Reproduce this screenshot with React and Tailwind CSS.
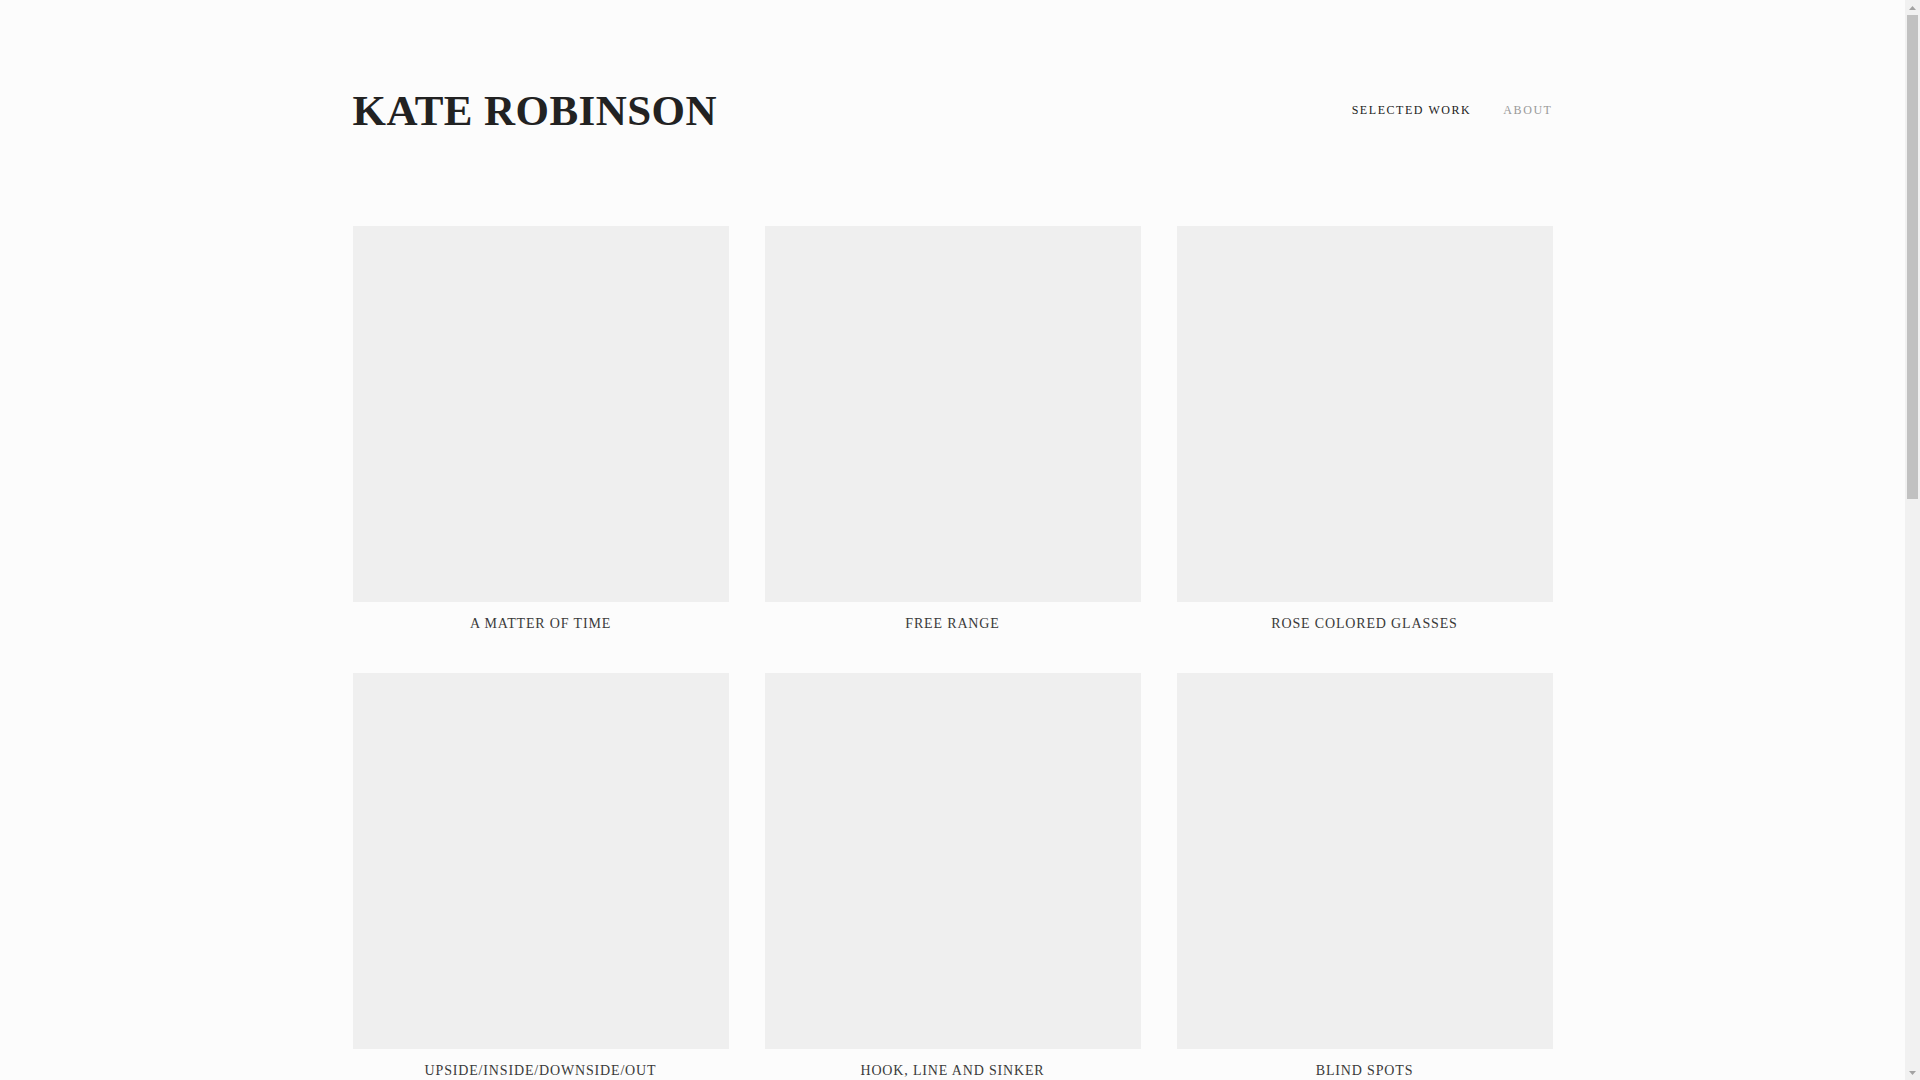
import React from 'react';

const projects = [
  'A MATTER OF TIME',
  'FREE RANGE',
  'ROSE COLORED GLASSES',
  'UPSIDE/INSIDE/DOWNSIDE/OUT',
  'HOOK, LINE AND SINKER',
  'BLIND SPOTS',
];

const serif = { fontFamily: '"Liberation Serif", "Times New Roman", serif' };

const ProjectCard = ({ title }) => (
  <a href="#" className="block">
    <div className="w-full aspect-square bg-[#efefef]"></div>
    <p className="pt-3 text-center text-[14px] leading-5 tracking-[0.06em] text-[#3a3a3a]">
      {title}
    </p>
  </a>
);

// Classic browser scrollbar look, drawn at the right edge
const Scrollbar = () => (
  <div className="w-[15px] h-screen shrink-0 bg-[#f1f1f1] flex flex-col items-center">
    <div className="h-[15px] w-full flex items-center justify-center">
      <svg width="7" height="4" viewBox="0 0 7 4">
        <polygon points="3.5,0 7,4 0,4" fill="#a3a3a3" />
      </svg>
    </div>
    <div className="w-[11px] h-[484px] bg-[#c1c1c1]"></div>
    <div className="flex-1"></div>
    <div className="h-[15px] w-full flex items-center justify-center">
      <svg width="7" height="4" viewBox="0 0 7 4">
        <polygon points="0,0 7,0 3.5,4" fill="#a3a3a3" />
      </svg>
    </div>
  </div>
);

export default function App() {
  return (
    <div className="flex h-screen overflow-hidden bg-[#fcfcfc]" style={serif}>
      <div className="flex-1 pt-[70px]">
        <div className="w-[1200px] mx-auto">
          {/* Header */}
          <header className="flex items-center justify-between h-[80px]">
            <h1 className="text-[43px] leading-none font-bold tracking-[0.01em] text-[#222222]">
              KATE ROBINSON
            </h1>
            <nav className="flex items-center gap-8 text-[12px] tracking-[0.13em]">
              <a href="#" className="text-[#222222]">SELECTED WORK</a>
              <a href="#" className="text-[#999999]">ABOUT</a>
            </nav>
          </header>

          {/* Work grid */}
          <main className="grid grid-cols-3 gap-x-[36px] gap-y-[39px] pt-[76px]">
            {projects.map((title) => (
              <ProjectCard key={title} title={title} />
            ))}
          </main>
        </div>
      </div>
      <Scrollbar />
    </div>
  );
}
